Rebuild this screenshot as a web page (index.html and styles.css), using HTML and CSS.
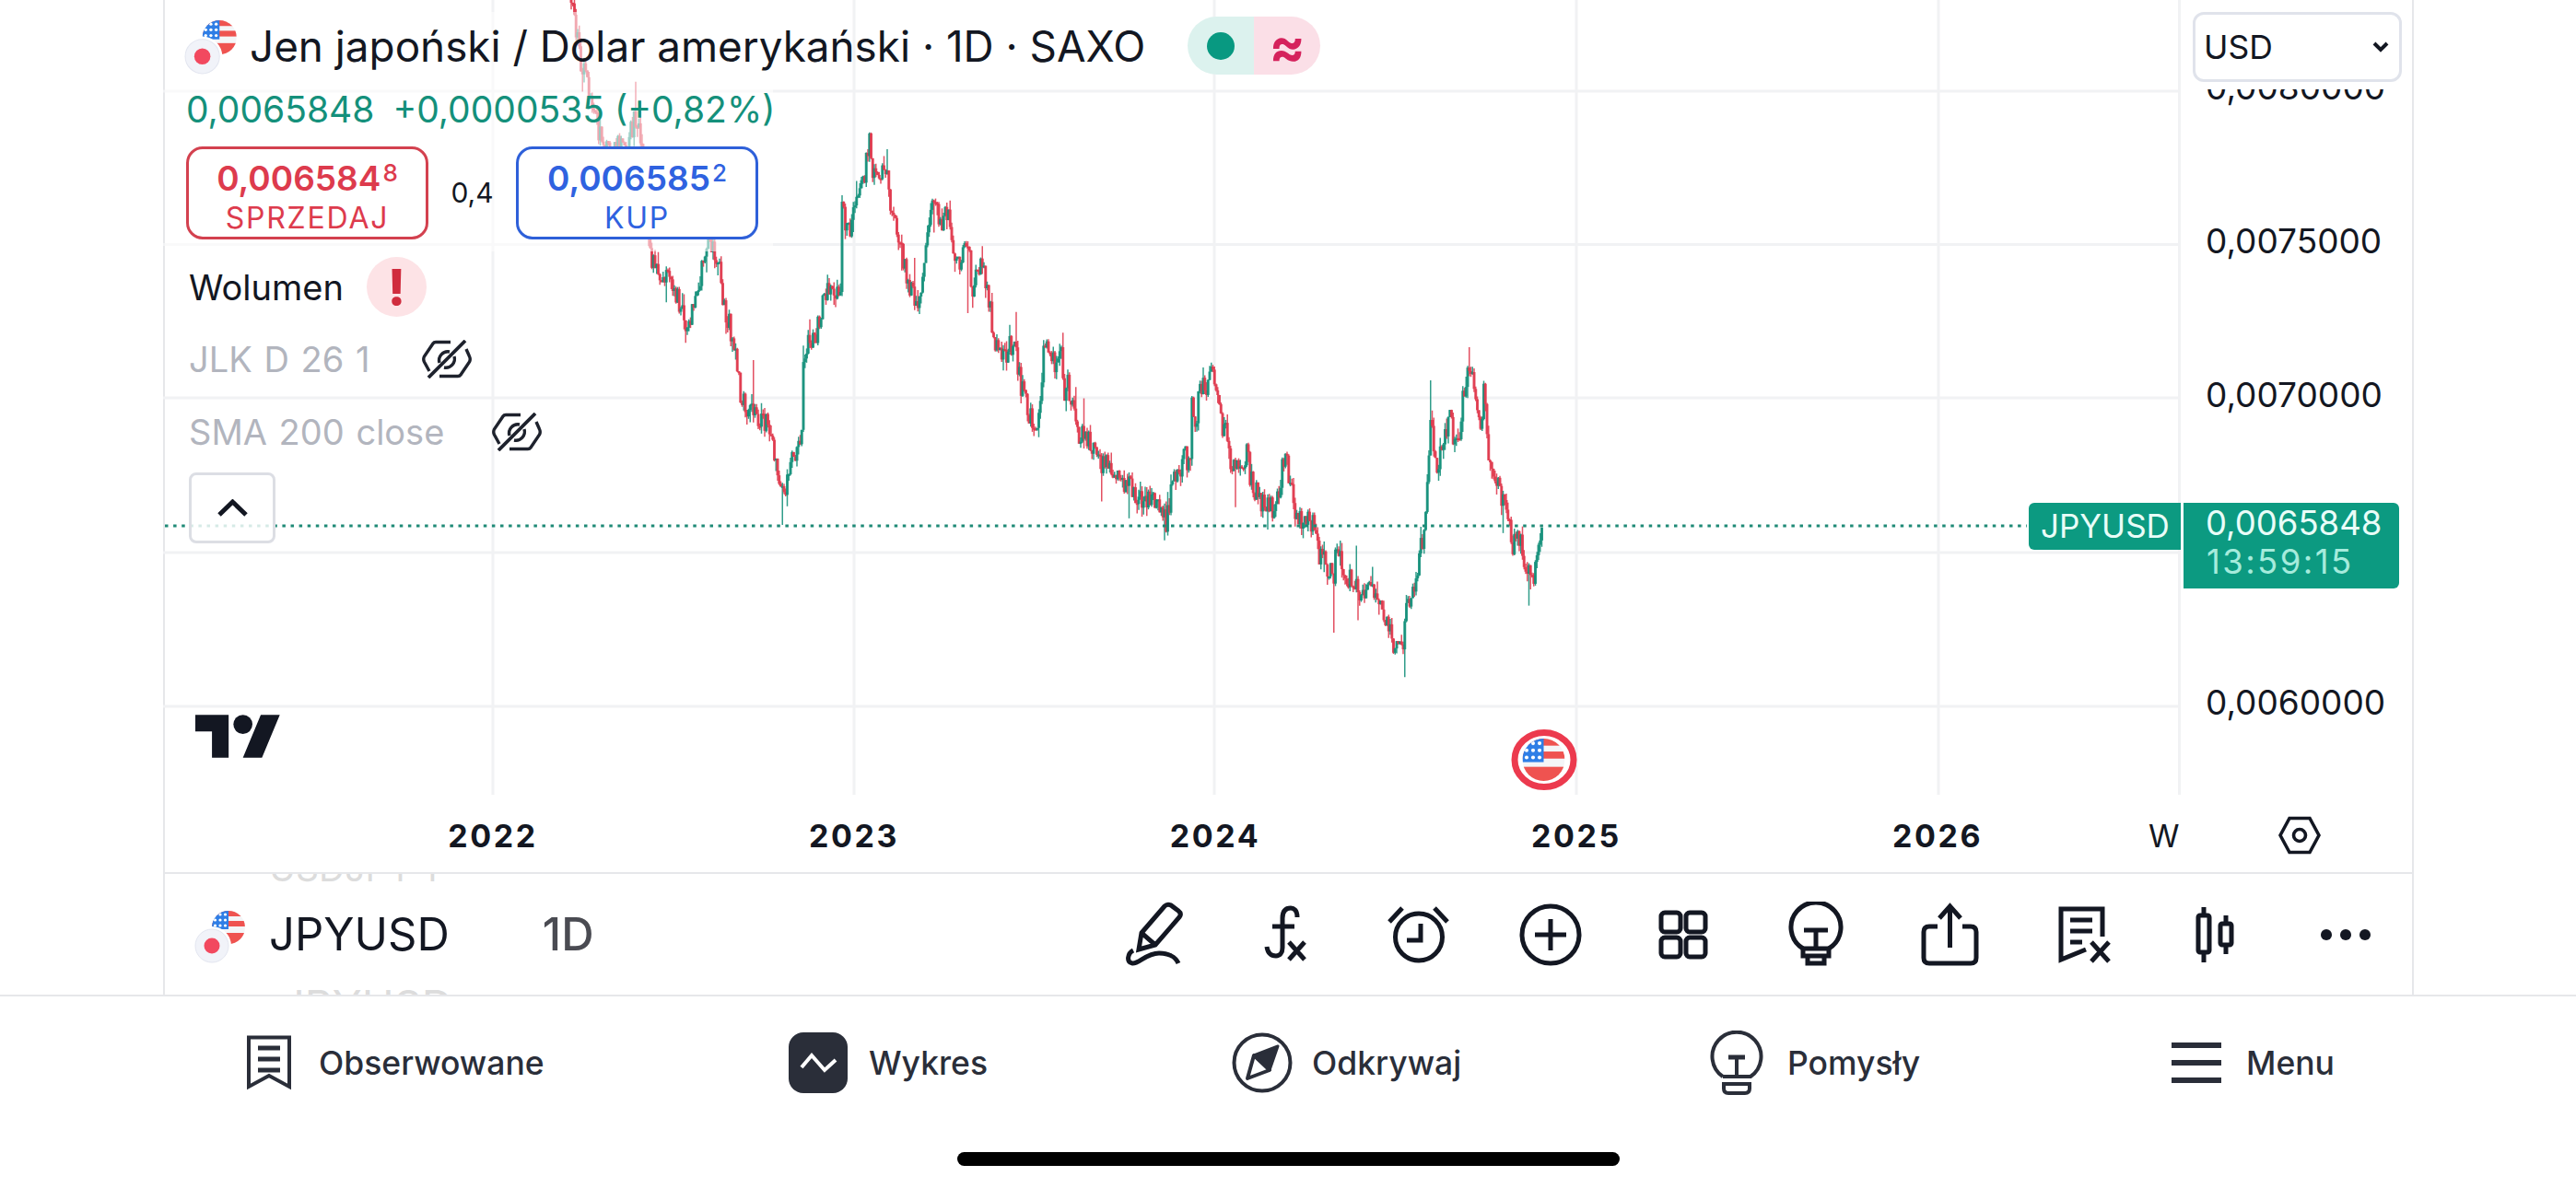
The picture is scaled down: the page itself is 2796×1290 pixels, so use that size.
FILE: index.html
```html
<!DOCTYPE html>
<html lang="pl">
<head>
<meta charset="utf-8">
<title>JPYUSD</title>
<link rel="stylesheet" href="styles.css">
</head>
<body>
<svg class="defs" width="0" height="0" aria-hidden="true">
  <defs>
    <clipPath id="us-clip"><circle cx="18" cy="18" r="18"/></clipPath>
    <symbol id="us-flag" viewBox="0 0 36 36">
      <g clip-path="url(#us-clip)">
        <rect width="36" height="36" fill="#f4f5f7"/>
        <rect y="0" width="36" height="6" fill="#ef5350"/>
        <rect y="11" width="36" height="6" fill="#ef5350"/>
        <rect y="24" width="36" height="12" fill="#ef5350"/>
        <rect y="0" width="18" height="20" fill="#2f7ee6"/>
        <g fill="#fff">
          <circle cx="9" cy="4" r="1.6"/><circle cx="14.5" cy="4" r="1.6"/>
          <circle cx="3.5" cy="10" r="1.6"/><circle cx="9" cy="10" r="1.6"/><circle cx="14.5" cy="10" r="1.6"/>
          <circle cx="3.5" cy="16" r="1.6"/><circle cx="9" cy="16" r="1.6"/><circle cx="14.5" cy="16" r="1.6"/>
        </g>
      </g>
    </symbol>
    <symbol id="pair" viewBox="0 0 60 60">
      <use href="#us-flag" x="19" y="1" width="36" height="36"/>
      <circle cx="19" cy="39" r="21" fill="#fff"/>
      <circle cx="19" cy="39" r="18" fill="#f1f3f9" stroke="#e3e6f0" stroke-width="1"/>
      <circle cx="19" cy="39" r="8.5" fill="#f2495f"/>
    </symbol>
    <symbol id="eye-off" viewBox="0 0 54 42">
      <g fill="none" stroke="#1e222d" stroke-width="3.4">
        <path d="M31 2.5 H15 Q13 2.5 12 4 L2.5 18 Q1 21 2.5 24 L8 34"/>
        <path d="M48 10 L51.5 18 Q53 21 51.5 24 L42 38 Q41 39.5 39 39.5 H19"/>
        <path d="M30 13 A9.5 9.5 0 0 0 19 25"/>
        <path d="M35 18 A9.5 9.5 0 0 1 24 30"/>
        <path d="M7 41 L47 1" stroke-width="3.8"/>
      </g>
    </symbol>
  </defs>
</svg>

<main class="frame">
  <section class="chart">
    <div class="pane">
      <svg class="plot" viewBox="177 0 2187 863" width="2187" height="863">
        <g class="grid">
          <line x1="177" x2="2364" y1="99" y2="99"/>
          <line x1="177" x2="2364" y1="265.5" y2="265.5"/>
          <line x1="177" x2="2364" y1="432" y2="432"/>
          <line x1="177" x2="2364" y1="600" y2="600"/>
          <line x1="177" x2="2364" y1="767" y2="767"/>
          <line x1="535" x2="535" y1="0" y2="863"/>
          <line x1="927" x2="927" y1="0" y2="863"/>
          <line x1="1318" x2="1318" y1="0" y2="863"/>
          <line x1="1711" x2="1711" y1="0" y2="863"/>
          <line x1="2104" x2="2104" y1="0" y2="863"/>
        </g>
        <g id="candles"></g>
        <line class="last-line" x1="179" x2="2200" y1="571" y2="571"/>
        <g class="event">
          <ellipse cx="1676" cy="825" rx="32" ry="29.5" fill="#fff" stroke="#ec3a4e" stroke-width="7"/>
          <use href="#us-flag" x="1652" y="802" width="47" height="46"/>
        </g>
      </svg>

      <div class="legend">
        <div class="legend-head">
          <div class="title-row">
            <svg class="pair-top"><use href="#pair"/></svg>
            <h1 class="title">Jen japoński / Dolar amerykański · 1D · SAXO</h1>
            <div class="status">
              <span class="status-open"><i class="status-dot"></i></span>
              <span class="status-delay">≈</span>
            </div>
          </div>
          <div class="price-row">
            <span>0,0065848</span>
            <span>+0,0000535 (+0,82%)</span>
          </div>
          <div class="trade-row">
            <div class="trade sell">
              <div class="trade-price">0,006584<span class="sup">8</span></div>
              <div class="trade-label">SPRZEDAJ</div>
            </div>
            <div class="spread">0,4</div>
            <div class="trade buy">
              <div class="trade-price">0,006585<span class="sup">2</span></div>
              <div class="trade-label">KUP</div>
            </div>
          </div>
        </div>
        <div class="study study-volume">
          <span class="study-name">Wolumen</span>
          <span class="alert">!</span>
        </div>
        <div class="study study-off">
          <span class="study-name">JLK D 26 1</span>
          <svg class="eye"><use href="#eye-off"/></svg>
        </div>
        <div class="study study-off study-sma">
          <span class="study-name">SMA 200 close</span>
          <svg class="eye"><use href="#eye-off"/></svg>
        </div>
        <div class="collapse">
          <svg width="35" height="20" viewBox="0 0 35 20"><path d="M3 17 L17.5 3 L32 17" fill="none" stroke="#131722" stroke-width="5"/></svg>
        </div>
      </div>

      <svg class="tv-logo" viewBox="0 4 36 18" width="93" height="47" aria-label="TradingView">
        <path d="M14 22H7V11H0V4h14v18zM28 22h-8l7.5-18h8L28 22z"/>
        <circle cx="20" cy="8" r="4"/>
      </svg>
    </div>

    <aside class="axis">
      <div class="axis-label">0,0080000</div>
      <div class="axis-label">0,0075000</div>
      <div class="axis-label">0,0070000</div>
      <div class="axis-label">0,0065000</div>
      <div class="axis-label">0,0060000</div>

      <div class="select-wrap">
        <div class="select">
          <span>USD</span>
          <svg width="18" height="12" viewBox="0 0 18 12"><path d="M2 2 L9 9 L16 2" fill="none" stroke="#131722" stroke-width="4"/></svg>
        </div>
      </div>
      <div class="tag-symbol">JPYUSD</div>
      <div class="tag-price">
        <div>0,0065848</div>
        <div class="countdown">13:59:15</div>
      </div>
    </aside>
  </section>

  <section class="time-axis">
    <span class="year">2022</span>
    <span class="year">2023</span>
    <span class="year">2024</span>
    <span class="year">2025</span>
    <span class="year">2026</span>
    <span class="scale-w">W</span>
    <svg class="hex" width="46" height="42" viewBox="0 0 46 42">
      <path d="M12 2.5 H34 L44 21 L34 39.5 H12 L2 21Z" fill="none" stroke="#131722" stroke-width="3.6"/>
      <circle cx="23" cy="21" r="6.5" fill="none" stroke="#131722" stroke-width="3.6"/>
    </svg>
  </section>

  <section class="toolbar">
    <span class="ghost ghost-top">USDJPY 1</span>
    <span class="ghost ghost-bottom">JPYUSD</span>
    <svg class="pair-bottom"><use href="#pair"/></svg>
    <span class="ticker">JPYUSD</span>
    <span class="interval">1D</span>
    <div class="tools">
      <span class="tool"><svg viewBox="0 0 72 72">
        <path d="M23 34 L48 5 Q51 2 55 4 L63 10 Q67 13 64 17 L38 47 L20 52 Z M23 34 L38 47"/>
        <path d="M14 53 C8 56 6 66 13 67 C20 68 28 56 42 56 C52 56 60 60 63 67"/>
      </svg></span>
      <span class="tool"><svg viewBox="0 0 72 72">
        <path d="M48 17 C48 9 44 7 41 7 C35 7 32 11 32 18 L32 50 C32 56 29 59 25 59 C20 59 16 56 15 49"/>
        <path d="M21 27 H45"/>
        <path d="M39 44 L56 63 M56 44 L39 63"/>
      </svg></span>
      <span class="tool"><svg viewBox="0 0 72 72">
        <circle cx="36" cy="38.5" r="25.5"/>
        <path d="M38 24 V42 H23"/>
        <path d="M4 22 L18 7 M53 7 L67 22"/>
      </svg></span>
      <span class="tool"><svg viewBox="0 0 72 72">
        <circle cx="36" cy="36" r="31"/>
        <path d="M36 19 V53 M19 36 H53"/>
      </svg></span>
      <span class="tool"><svg viewBox="0 0 72 72">
        <rect x="12" y="12" width="21" height="21" rx="4"/>
        <rect x="39" y="12" width="21" height="21" rx="4"/>
        <rect x="12" y="39" width="21" height="21" rx="4"/>
        <rect x="39" y="39" width="21" height="21" rx="4"/>
      </svg></span>
      <span class="tool"><svg viewBox="0 0 72 72">
        <path d="M22 51 A27 27 0 1 1 50 51"/>
        <path d="M22 51 H50 V59 H22Z M27 59 V67 H45 V59"/>
        <path d="M23 31 H49 M36 31 V51"/>
      </svg></span>
      <span class="tool"><svg viewBox="0 0 72 72">
        <path d="M24 27 H15 Q9 27 9 33 V61 Q9 67 15 67 H60 Q66 67 66 61 V33 Q66 27 60 27 H51"/>
        <path d="M37.5 50 V6 M26 18 L37.5 5 L49 18"/>
      </svg></span>
      <span class="tool"><svg viewBox="0 0 72 72">
        <path d="M59 38 V8 H14 V63 L41 52"/>
        <path d="M24 20 H48 M24 32 H48 M24 44 H37"/>
        <path d="M47 44 L66 65 M66 44 L47 65"/>
      </svg></span>
      <span class="tool"><svg viewBox="0 0 72 72">
        <path d="M26 6 V15 M26 55 V66 M50 15 V24 M50 47 V57"/>
        <rect x="20" y="15" width="12" height="40" rx="2"/>
        <rect x="44" y="24" width="12" height="23" rx="2"/>
      </svg></span>
      <span class="tool"><svg viewBox="0 0 72 72" class="dots">
        <circle cx="15" cy="36" r="6"/><circle cx="36" cy="36" r="6"/><circle cx="57" cy="36" r="6"/>
      </svg></span>
    </div>
  </section>
</main>

<nav class="nav">
  <div class="nav-items">
    <a class="nav-item nav-watch">
      <svg width="48" height="60" viewBox="0 0 48 60">
        <path d="M2 2.5 H46 V56 L24 44 L2 56 Z" fill="none" stroke="#2a2e39" stroke-width="4"/>
        <path d="M12 14 H36 M12 26 H36 M12 38 H36" stroke="#2a2e39" stroke-width="5"/>
      </svg>
      <span>Obserwowane</span>
    </a>
    <a class="nav-item nav-chart">
      <svg width="64" height="66" viewBox="0 0 64 66">
        <rect width="64" height="66" rx="16" fill="#2a2e39"/>
        <path d="M14 38 L25 25 L39 41 L51 30" fill="none" stroke="#fff" stroke-width="4"/>
      </svg>
      <span>Wykres</span>
    </a>
    <a class="nav-item nav-discover">
      <svg width="66" height="66" viewBox="0 0 66 66">
        <circle cx="33" cy="33" r="30.5" fill="none" stroke="#2a2e39" stroke-width="4"/>
        <path d="M50 15 L24 25 L41 41 Z" fill="#2a2e39" stroke="#2a2e39" stroke-width="3" stroke-linejoin="round"/>
        <path d="M24 25 L17 50 L41 41 Z" fill="none" stroke="#2a2e39" stroke-width="4" stroke-linejoin="round"/>
      </svg>
      <span>Odkrywaj</span>
    </a>
    <a class="nav-item nav-ideas">
      <svg width="58" height="70" viewBox="0 0 58 70">
        <g fill="none" stroke="#2a2e39" stroke-width="4">
          <path d="M14 50 A26.5 26.5 0 1 1 44 50 H14"/>
          <path d="M15 58 H43 V63 Q43 68 38 68 H20 Q15 68 15 63Z"/>
          <path d="M20 29 H38" stroke-width="5"/>
          <path d="M29 29 V50"/>
        </g>
      </svg>
      <span>Pomysły</span>
    </a>
    <a class="nav-item nav-menu">
      <svg width="54" height="44" viewBox="0 0 54 44">
        <path d="M0 3 H54 M0 22 H54 M0 41 H54" stroke="#2a2e39" stroke-width="6"/>
      </svg>
      <span>Menu</span>
    </a>
  </div>
  <div class="home-bar"></div>
</nav>
<script src="chart.js"></script>
</body>
</html>
```
FILE: styles.css
```css
* { box-sizing: border-box; }
html, body { margin: 0; padding: 0; background: #fff; }
body {
  width: 2796px;
  height: 1290px;
  overflow: hidden;
  font-family: Inter, "Noto Sans", "Liberation Sans", sans-serif;
  color: #131722;
}
.defs { position: absolute; }

.frame {
  width: 2443px;
  height: 1080px;
  margin-left: 177px;
  border-left: 2px solid #e6e7ea;
  border-right: 2px solid #e6e7ea;
  display: flex;
  flex-direction: column;
}

.chart { display: flex; height: 863px; flex: none; }
.pane { position: relative; flex: 1; overflow: visible; }
.plot { position: absolute; left: -2px; top: 0; display: block; }
.grid line { stroke: #f1f2f4; stroke-width: 3; }
.last-line { stroke: #1f8a77; stroke-width: 3; stroke-dasharray: 3.5 5.6; }

.legend { position: absolute; left: 0; top: 0; display: flex; flex-direction: column; }
.legend-head {
  margin-top: 13px;
  width: 660px;
  padding-left: 23px;
  padding-bottom: 13px;
  background: rgba(255, 255, 255, .55);
}
.title-row { display: flex; align-items: center; height: 76px; white-space: nowrap; }
.pair-top { width: 62px; height: 62px; flex: none; margin-left: -2px; margin-top: 2px; }
.title { margin: 0 0 0 9px; font-size: 45.8px; font-weight: 400; line-height: 1; color: #131722; }
.status { display: flex; margin-left: 46px; height: 63px; flex: none; margin-top: -3px; }
.status-open {
  width: 72px; background: #dcf2ee; border-radius: 32px 0 0 32px;
  display: flex; align-items: center; justify-content: center;
}
.status-dot { width: 30px; height: 30px; border-radius: 50%; background: #089981; }
.status-delay {
  width: 72px; background: #fbdfe7; border-radius: 0 32px 32px 0;
  display: flex; align-items: center; justify-content: center;
  font-size: 58px; font-weight: 700; color: #d5225c; line-height: 1;
}
.price-row {
  height: 58px; display: flex; align-items: center; gap: 20px;
  font-size: 39px; color: #14907b; white-space: nowrap;
}
.trade-row { display: flex; margin-top: 12px; height: 101px; width: 621px; }
.trade {
  width: 263px; height: 101px; border: 3px solid; border-radius: 18px; background: #fff;
  display: flex; flex-direction: column; align-items: center; padding-top: 6px;
}
.sell { border-color: #d3414f; color: #dd3b4d; }
.buy { border-color: #2e60d9; color: #2f62e0; }
.trade-price { font-size: 37px; font-weight: 600; line-height: 40px; white-space: nowrap; }
.sup { font-size: 26px; font-weight: 500; vertical-align: 10px; margin-left: 2px; }
.trade-label { font-size: 32px; line-height: 36px; margin-top: 5px; letter-spacing: 1.8px; font-weight: 400; }
.spread {
  width: 95px; text-align: center; font-size: 30px; line-height: 101px; color: #131722;
}

.study { display: flex; align-items: center; padding-left: 26px; white-space: nowrap; }
.study-name { font-size: 38px; line-height: 44px; word-spacing: 2px; }
.study-volume { margin-top: 6px; height: 65px; gap: 25px; }
.study-off { margin-top: 24px; height: 44px; gap: 57px; }
.study-off .study-name { color: #b2b5be; }
.study-sma { margin-top: 35px; gap: 52px; }
.alert {
  width: 65px; height: 65px; border-radius: 50%; background: #fde3e6; color: #d02c3e;
  font-size: 54px; font-weight: 800; line-height: 65px; text-align: center;
}
.eye { width: 54px; height: 42px; flex: none; }
.collapse {
  margin: 22px 0 0 26px; width: 94px; height: 77px;
  border: 3px solid #dcdee4; border-radius: 8px; background: rgba(255, 255, 255, .82);
  display: flex; align-items: center; justify-content: center;
}
.tv-logo { position: absolute; left: 33px; top: 776px; fill: #131722; }

.axis {
  position: relative; width: 254px; flex: none;
  border-left: 3px solid #f1f2f4; padding-top: 11px; background: #fff;
}
.axis-label {
  height: 167px; display: flex; align-items: center; padding-left: 27px;
  font-size: 37px; color: #131722; white-space: nowrap;
}
.select-wrap {
  position: absolute; left: 0; right: 0; top: 0; height: 97px; background: #fff;
  padding: 13px 11px 0 13px;
}
.select {
  height: 76px; border: 3px solid #e0e3eb; border-radius: 12px; background: #fff;
  display: flex; align-items: center; justify-content: space-between;
  padding: 0 11px 0 9px; font-size: 35.5px; color: #131722;
}
.tag-symbol {
  position: absolute; right: 100%; top: 546px; width: 165px; height: 51px;
  background: #0c9a81; border-radius: 6px 0 0 6px; color: #e9fdf8;
  font-size: 35px; line-height: 51px; padding-left: 13px; white-space: nowrap;
}
.tag-price {
  position: absolute; left: 3px; top: 546px; width: 234px; height: 93px;
  background: #0c9a81; border-radius: 0 6px 6px 0; color: #e9fdf8;
  font-size: 36.5px; line-height: 42px; padding: 1px 0 0 24px; white-space: nowrap;
}
.countdown { color: #a5ebdc; padding-left: 1px; letter-spacing: 2.4px; }

.time-axis {
  display: flex; align-items: center; height: 86px; flex: none;
  padding-left: 160px; border-bottom: 2px solid #e6e7ea; padding-top: 4px;
}
.year {
  width: 392px; flex: none; text-align: center;
  font-size: 34px; font-weight: 700; letter-spacing: 2.6px; color: #131722;
}
.scale-w { margin-left: 33px; font-size: 34px; width: 30px; }
.hex { margin-left: 111px; flex: none; }

.toolbar {
  position: relative; overflow: hidden; flex: 1;
  display: flex; align-items: center; padding-left: 32px;
}
.ghost { position: absolute; color: #dcdcdc; white-space: nowrap; line-height: 1; }
.ghost-top { left: 113px; top: -26px; font-size: 39px; }
.ghost-bottom { left: 125px; top: 119px; font-size: 47px; }
.pair-bottom { width: 60px; height: 60px; flex: none; margin-top: 6px; }
.ticker { margin-left: 21px; font-size: 49px; color: #131722; position: relative; }
.interval { margin-left: 101px; font-size: 49px; font-weight: 500; color: #4a4b52; position: relative; }
.tools { margin-left: auto; display: flex; height: 72px; }
.tool { width: 143.8px; display: flex; justify-content: center; }
.tool svg {
  width: 72px; height: 72px; fill: none; stroke: #131722; stroke-width: 5;
}
.tool svg.dots { fill: #131722; stroke: none; }

.nav {
  height: 210px; border-top: 2px solid #e6e7ea;
  display: flex; flex-direction: column; align-items: center;
}
.nav-items {
  width: 100%; display: grid;
  grid-template-columns: 588px 481px 519px 501px 1fr;
  padding: 37px 0 0 268px;
}
.nav-item {
  display: flex; align-items: center; height: 70px;
  font-size: 35.5px; font-weight: 500; color: #2a2e39; white-space: nowrap;
}
.nav-watch { gap: 30px; }
.nav-chart { gap: 23px; }
.nav-discover { gap: 21px; }
.nav-ideas { gap: 26px; }
.nav-menu { gap: 27px; }
.home-bar {
  width: 719px; height: 15px; border-radius: 8px; background: #000;
  margin-top: auto; margin-bottom: 24px;
}
```
FILE: chart.js
```js
// Draws the daily candles along a traced price path.
(function () {
  var path = [
    [606,-50],[621,0],[629,60],[640,100],[648,135],[655,160],[664,172],[672,150],[680,160],[687,135],[693,125],
    [698,170],[702,230],[705,277],[713,300],[728,307],[740,337],[747,360],[753,327],[763,287],[769,263],[780,287],
    [786,330],[793,360],[799,390],[805,437],[813,447],[820,453],[832,460],[839,480],[845,520],[850,543],[857,503],
    [866,490],[871,470],[872,397],[878,370],[885,370],[889,347],[897,317],[906,323],[912,323],[914,230],[922,257],
    [929,213],[939,187],[943,150],[947,187],[954,203],[962,177],[966,223],[975,257],[981,287],[990,320],[998,333],
    [1002,287],[1008,240],[1015,210],[1021,247],[1029,223],[1035,270],[1044,283],[1052,267],[1055,323],[1061,293],
    [1067,290],[1073,330],[1079,360],[1084,390],[1096,377],[1103,383],[1107,413],[1116,447],[1122,462],[1128,450],
    [1132,393],[1136,363],[1143,393],[1147,403],[1151,367],[1155,430],[1159,417],[1165,447],[1171,477],[1179,473],
    [1184,487],[1189,473],[1194,503],[1199,497],[1209,513],[1217,533],[1226,523],[1234,538],[1246,543],[1252,547],
    [1256,537],[1266,567],[1274,517],[1282,510],[1286,497],[1292,500],[1294,430],[1296,473],[1302,423],[1309,423],
    [1315,397],[1321,427],[1325,460],[1331,467],[1337,513],[1345,507],[1353,490],[1357,517],[1363,533],[1369,547],
    [1381,552],[1389,537],[1392,493],[1398,510],[1402,533],[1406,563],[1416,565],[1426,570],[1432,600],[1442,617],
    [1448,627],[1450,593],[1458,623],[1472,637],[1479,647],[1485,623],[1491,640],[1499,653],[1507,680],[1515,703],
    [1523,700],[1527,653],[1535,643],[1541,600],[1547,573],[1549,520],[1553,447],[1558,503],[1566,493],[1572,450],
    [1582,493],[1588,427],[1594,393],[1602,433],[1608,460],[1610,420],[1616,493],[1620,523],[1630,537],[1636,560],
    [1641,593],[1647,570],[1653,600],[1661,630],[1667,617],[1673,590],[1674,573]
  ];
  var spikes = [[850,570],[1448,687],[1553,413],[1594,377],[943,145],[1661,640],[1515,707],[1050,340],[914,212],[818,391]];
  var UP = "#14907b", DOWN = "#e0394d", STEP = 1.75;
  var seed = 20241;
  function rnd() {
    seed = (seed + 0x6D2B79F5) | 0;
    var t = Math.imul(seed ^ (seed >>> 15), 1 | seed);
    t = (t + Math.imul(t ^ (t >>> 7), 61 | t)) ^ t;
    return ((t ^ (t >>> 14)) >>> 0) / 4294967296;
  }
  function at(x) {
    for (var i = 1; i < path.length; i++) {
      if (x <= path[i][0]) {
        var a = path[i - 1], b = path[i];
        return a[1] + (b[1] - a[1]) * (x - a[0]) / Math.max(b[0] - a[0], 0.001);
      }
    }
    return path[path.length - 1][1];
  }
  var ns = "http://www.w3.org/2000/svg";
  var host = document.getElementById("candles");
  var prev = at(606);
  function line(x, y1, y2, color, w) {
    var l = document.createElementNS(ns, "line");
    l.setAttribute("x1", x); l.setAttribute("x2", x);
    l.setAttribute("y1", y1); l.setAttribute("y2", y2);
    l.setAttribute("stroke", color); l.setAttribute("stroke-width", w);
    l.setAttribute("opacity", "0.88");
    host.appendChild(l);
  }
  for (var x = 606; x <= 1674; x += STEP) {
    var last = x + STEP > 1674;
    var close = last ? 573 : at(x) + (rnd() - 0.5) * 26;
    var up = close < prev;
    var top = Math.min(prev, close), bot = Math.max(prev, close);
    if (bot - top < 2) bot = top + 2;
    var hi = top - rnd() * rnd() * 14, lo = bot + rnd() * rnd() * 14;
    if (!last && rnd() < 0.05) {
      if (rnd() < 0.5) hi -= 12 + rnd() * 22; else lo += 12 + rnd() * 22;
    }
    spikes.forEach(function (s) {
      if (Math.abs(s[0] - x) < STEP / 2) {
        if (s[1] < hi) hi = s[1];
        if (s[1] > lo) lo = s[1];
      }
    });
    var color = up ? UP : DOWN;
    line(x, hi, lo, color, 1.5);
    line(x, top, bot, color, 3);
    prev = close;
  }
})();
```
